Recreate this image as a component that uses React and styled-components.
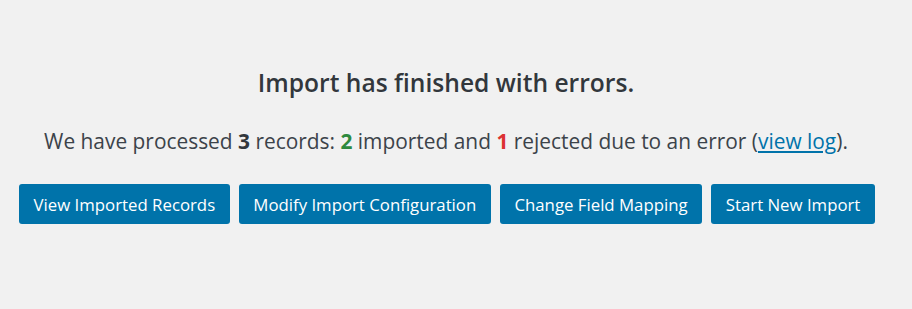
import React from "react";
import styled, { createGlobalStyle } from "styled-components";

const Global = createGlobalStyle`
  html, body { margin: 0; padding: 0; background: #f1f1f1; }
  body { font-family: "Open Sans", "Noto Sans", sans-serif; color: #3c434a; }
`;

const Wrap = styled.div`
  width: 854px;
  margin-left: 19px;
  padding-top: 67px;
  display: flex;
  flex-direction: column;
`;

const Title = styled.h2`
  margin: 0;
  text-align: center;
  font-size: 24.6px;
  font-weight: 600;
  line-height: 32px;
  color: #32373c;
`;

const Summary = styled.p`
  margin: 28px 0 0;
  text-align: center;
  font-size: 20.9px;
  line-height: 28px;
  color: #3c434a;
`;

const Num = styled.strong`
  font-weight: 700;
  color: ${(p) => p.$color || "#32373c"};
`;

const Link = styled.a`
  color: #0073aa;
  text-decoration: underline;
`;

const Actions = styled.div`
  margin-top: 29px;
  display: flex;
  gap: 9px;
`;

const Button = styled.button`
  height: 40px;
  padding: 0 14.6px;
  border: 0;
  border-radius: 3px;
  background: #0073aa;
  color: #ffffff;
  font-family: "Open Sans", "Noto Sans", sans-serif;
  font-size: 16.8px;
  cursor: pointer;
  white-space: nowrap;
`;

export default function App() {
  return (
    <>
      <Global />
      <Wrap>
        <Title>Import has finished with errors.</Title>
        <Summary>
          We have processed <Num>3</Num> records: <Num $color="#2e8a3e">2</Num> imported and{" "}
          <Num $color="#dc3232">1</Num> rejected due to an error (<Link href="#">view log</Link>).
        </Summary>
        <Actions>
          <Button>View Imported Records</Button>
          <Button>Modify Import Configuration</Button>
          <Button>Change Field Mapping</Button>
          <Button>Start New Import</Button>
        </Actions>
      </Wrap>
    </>
  );
}
